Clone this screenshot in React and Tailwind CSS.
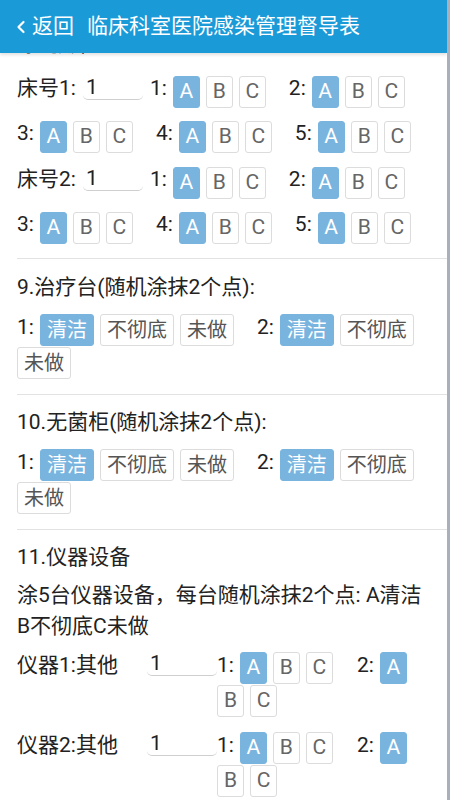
import React from 'react';

function LetterBtn({ label, on }) {
    return (
        <span
            className={
                on
                    ? 'flex h-[32px] w-[27px] items-center justify-center rounded-[3px] border border-[#79b4df] bg-[#79b4df] text-[21px] text-white'
                    : 'flex h-[32px] w-[27px] items-center justify-center rounded-[3px] border border-[#dcdcdc] bg-white text-[21px] text-[#666]'
            }
        >
            {label}
        </span>
    );
}

function WordBtn({ label, on }) {
    return (
        <span
            className={
                on
                    ? 'flex h-[32px] items-center rounded-[3px] border border-[#79b4df] bg-[#79b4df] px-[6px] text-[20px] text-white'
                    : 'flex h-[32px] items-center rounded-[3px] border border-[#dcdcdc] bg-white px-[6px] text-[20px] text-[#555]'
            }
        >
            {label}
        </span>
    );
}

// 1: A B C
function Group({ num, className = '' }) {
    return (
        <div className={`flex items-start gap-[6px] ${className}`}>
            <span className="leading-[24px]">{num}:</span>
            <LetterBtn label="A" on />
            <LetterBtn label="B" />
            <LetterBtn label="C" />
        </div>
    );
}

function Field({ w }) {
    return (
        <input
            readOnly
            value="1"
            className={`${w} mb-[8px] h-[24px] rounded-b-[5px] border-b border-[#cfcfcf] bg-transparent px-[3px] text-[21px] text-[#222] outline-none`}
        />
    );
}

function Bed({ n, first }) {
    return (
        <div className={first ? 'mt-[16px]' : 'mt-[14px]'}>
            <div className="flex items-start">
                <span className="leading-[24px]">床号{n}:</span>
                <div className="ml-[7px] flex">
                    <Field w="w-[60px]" />
                </div>
                <Group num="1" className="ml-[7px]" />
                <Group num="2" className="ml-[23px]" />
            </div>
            <div className="mt-[13px] flex items-start">
                <Group num="3" />
                <Group num="4" className="ml-[23px]" />
                <Group num="5" className="ml-[23px]" />
            </div>
        </div>
    );
}

function SpotRow() {
    return (
        <div className="mt-[11px] flex flex-wrap items-start gap-x-[6px] gap-y-[1px]">
            <span className="leading-[26px]">1:</span>
            <WordBtn label="清洁" on />
            <WordBtn label="不彻底" />
            <WordBtn label="未做" />
            <span className="ml-[17px] leading-[26px]">2:</span>
            <WordBtn label="清洁" on />
            <WordBtn label="不彻底" />
            <WordBtn label="未做" />
        </div>
    );
}

function Device({ n, className = '' }) {
    return (
        <div className={`flex items-start ${className}`}>
            <span className="w-[130px] leading-[26px]">仪器{n}:其他</span>
            <Field w="w-[70px]" />
            <div className="flex flex-1 flex-wrap items-start gap-x-[6px] gap-y-[1px]">
                <span className="leading-[26px]">1:</span>
                <LetterBtn label="A" on />
                <LetterBtn label="B" />
                <LetterBtn label="C" />
                <span className="ml-[18px] leading-[26px]">2:</span>
                <LetterBtn label="A" on />
                <LetterBtn label="B" />
                <LetterBtn label="C" />
            </div>
        </div>
    );
}

export default function App() {
    return (
        <div className="flex min-h-[800px] overflow-hidden bg-white font-['Roboto','Noto_Sans_CJK_SC',sans-serif] text-[21px] text-[#222]">
            <div className="h-[800px] w-[447px] overflow-hidden">

                {/* HEADER */}
                <div className="relative z-10 flex h-[53px] items-center bg-[#1b9ad8] text-white shadow-[0_2px_3px_rgba(0,0,0,0.12)]">
                    <svg width="10" height="14" viewBox="0 0 10 14" className="ml-[16px]">
                        <polyline points="7.5,2 2.5,7 7.5,12" fill="none" stroke="white" strokeWidth="2.2" strokeLinecap="round" strokeLinejoin="round" />
                    </svg>
                    <span className="ml-[6px] text-[21px]">返回</span>
                    <span className="ml-[13px] text-[21px]">临床科室医院感染管理督导表</span>
                </div>

                <div className="pl-[17px]">
                    {/* 8. 床单元 (scrolled) */}
                    <div className="pr-[17px] pb-[14px]">
                        <div className="-mt-[24px] leading-[31px]">涂5张床</div>
                        <Bed n="1" first />
                        <Bed n="2" />
                    </div>

                    {/* 9 */}
                    <div className="border-t border-[#e2e2e2] pr-[17px] pt-[13px] pb-[15px]">
                        <div className="leading-[31px]">9.治疗台(随机涂抹2个点):</div>
                        <SpotRow />
                    </div>

                    {/* 10 */}
                    <div className="border-t border-[#e2e2e2] pr-[17px] pt-[12px] pb-[15px]">
                        <div className="leading-[31px]">10.无菌柜(随机涂抹2个点):</div>
                        <SpotRow />
                    </div>

                    {/* 11 */}
                    <div className="border-t border-[#e2e2e2] pr-[17px] pt-[12px]">
                        <div className="leading-[31px]">11.仪器设备</div>
                        <div className="mt-[7px] leading-[31px]">涂5台仪器设备，每台随机涂抹2个点: A清洁B不彻底C未做</div>
                        <Device n="1" className="mt-[10px]" />
                        <Device n="2" className="mt-[15px]" />
                    </div>
                </div>
            </div>
            <div className="h-[800px] w-[3px] bg-[#a9afbb]"></div>
        </div>
    );
}
